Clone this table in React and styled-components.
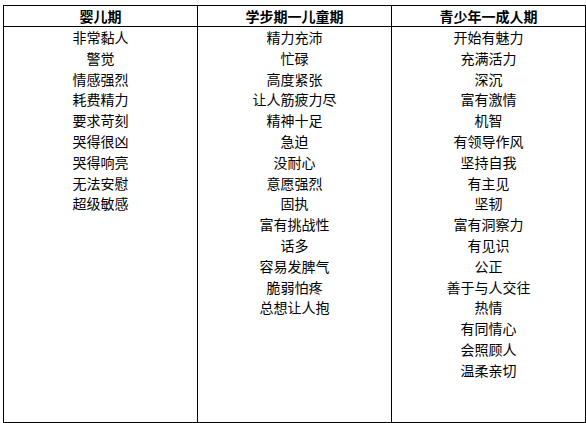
import styled, { createGlobalStyle } from "styled-components";

const GlobalStyle = createGlobalStyle`
  html, body {
    margin: 0;
    padding: 0;
    background: #ffffff;
  }
  body {
    font-family: "Noto Sans CJK SC", "Noto Sans", sans-serif;
    color: #000000;
  }
`;

const Page = styled.div`
  padding: 5px 0 0 3px;
`;

const Table = styled.div`
  box-sizing: border-box;
  width: 583px;
  height: 418px;
  border: 1px solid #000000;
  background: #000000;
  display: grid;
  grid-template-columns: repeat(3, 1fr);
  grid-template-rows: 20px 1fr;
  gap: 1px;
`;

const HeadCell = styled.div`
  background: #ffffff;
  display: flex;
  align-items: center;
  justify-content: center;
  font-size: 14px;
  font-weight: 700;
  line-height: 20px;
`;

const BodyCell = styled.div`
  background: #ffffff;
  display: flex;
  flex-direction: column;
  align-items: center;
  font-size: 14px;
`;

const Item = styled.div`
  height: 20.8px;
  line-height: 20.8px;
  white-space: nowrap;
`;

const columns = [
  {
    title: "婴儿期",
    items: ["非常黏人", "警觉", "情感强烈", "耗费精力", "要求苛刻", "哭得很凶", "哭得响亮", "无法安慰", "超级敏感"],
  },
  {
    title: "学步期一儿童期",
    items: [
      "精力充沛", "忙碌", "高度紧张", "让人筋疲力尽", "精神十足", "急迫", "没耐心",
      "意愿强烈", "固执", "富有挑战性", "话多", "容易发脾气", "脆弱怕疼", "总想让人抱",
    ],
  },
  {
    title: "青少年一成人期",
    items: [
      "开始有魅力", "充满活力", "深沉", "富有激情", "机智", "有领导作风", "坚持自我",
      "有主见", "坚韧", "富有洞察力", "有见识", "公正", "善于与人交往", "热情",
      "有同情心", "会照顾人", "温柔亲切",
    ],
  },
];

export default function App() {
  return (
    <Page>
      <GlobalStyle />
      <Table>
        {columns.map((c) => (
          <HeadCell key={c.title}>{c.title}</HeadCell>
        ))}
        {columns.map((c) => (
          <BodyCell key={c.title + "-body"}>
            {c.items.map((t, i) => (
              <Item key={i}>{t}</Item>
            ))}
          </BodyCell>
        ))}
      </Table>
    </Page>
  );
}
